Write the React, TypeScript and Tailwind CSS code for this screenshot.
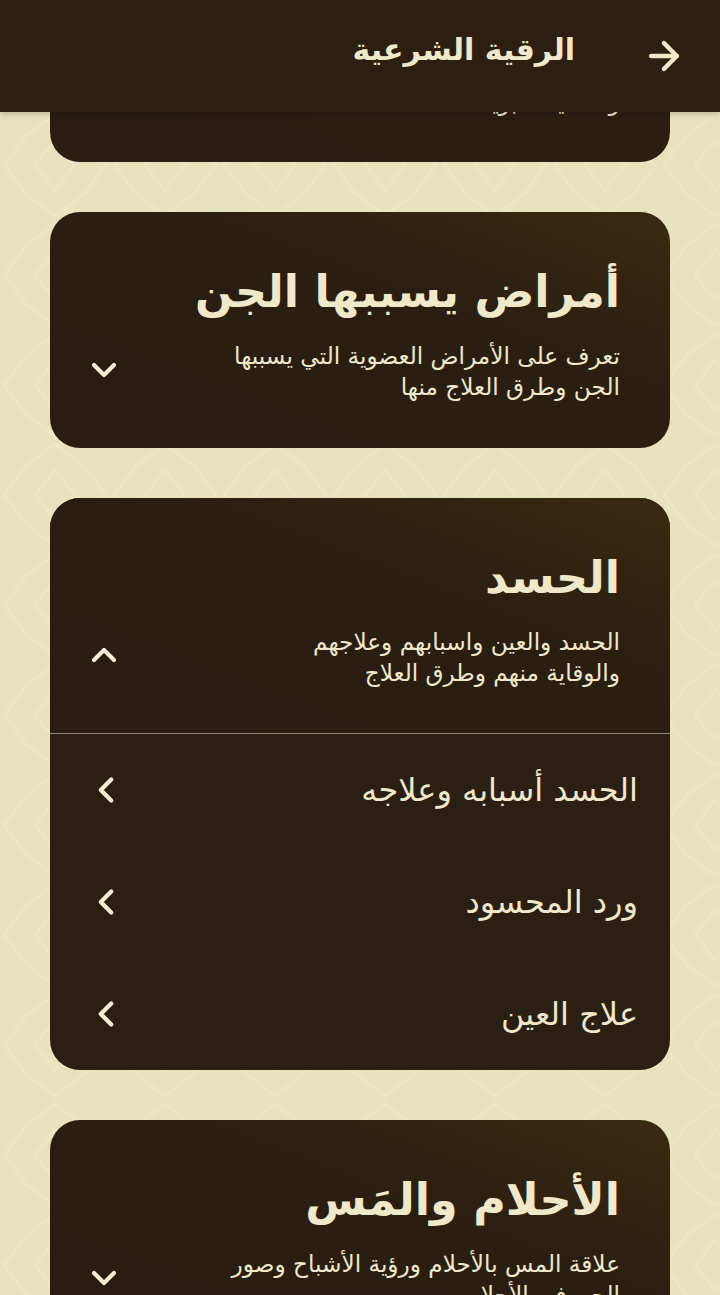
import { ChevronDown, ChevronLeft, ChevronUp, ArrowRight } from 'lucide-react';

const font = "font-['DejaVu_Sans','Noto_Sans',sans-serif]";

// faint arabesque tiles behind the cards
function Pattern() {
  return (
    <svg className="absolute inset-0 h-full w-full" aria-hidden="true">
      <defs>
        <pattern id="tile" width="110" height="110" patternUnits="userSpaceOnUse">
          <path d="M55 4 L84 26 L106 55 L84 84 L55 106 L26 84 L4 55 L26 26 Z M55 30 L75 55 L55 80 L35 55 Z" fill="none" stroke="#ebe6c6" strokeWidth="3" />
        </pattern>
      </defs>
      <rect width="100%" height="100%" fill="url(#tile)" />
    </svg>
  );
}

function CardHead({ title, desc, open }: { title: string; desc: string[]; open?: boolean }) {
  const Icon = open ? ChevronUp : ChevronDown;
  return (
    <div className="flex h-[235.5px] items-center justify-between bg-gradient-to-tr from-[#291d11] via-[#2a1e11] via-60% to-[#3b2a12] pr-[50px] pl-[34px]">
      <div className="pt-[10px]">
        <h2 className="text-[44.5px] leading-[50px] font-bold text-[#f0e9c9]">{title}</h2>
        <div className="mt-[23px] text-[23.2px] leading-[31px] text-[#efe8cb]">
          {desc.map((line) => <p key={line}>{line}</p>)}
        </div>
      </div>
      <Icon className="mt-[80px] h-[40px] w-[40px] text-[#f3edd2]" strokeWidth={2.5} />
    </div>
  );
}

function SubItem({ label }: { label: string }) {
  return (
    <div className="flex h-[112px] items-center justify-between pr-[32px] pl-[35px]">
      <span className="text-[32px] text-[#efe8cb]">{label}</span>
      <ChevronLeft className="h-[42px] w-[42px] text-[#f3edd2]" strokeWidth={2.4} />
    </div>
  );
}

export default function App() {
  return (
    <div dir="rtl" className={`relative h-[1295px] overflow-hidden bg-[#e8e3bf] ${font}`}>
      <Pattern />
      <header className="absolute inset-x-0 top-0 z-10 flex h-[112px] items-center bg-[#2c1f12] pr-[34px] shadow-[0_2px_6px_rgba(0,0,0,0.2)]">
        <ArrowRight className="h-[44px] w-[44px] text-[#f0e9c9]" strokeWidth={2.4} />
        <h1 className="mr-[67px] mb-[14px] text-[30px] font-bold text-[#f0e9c9]">الرقية الشرعية</h1>
      </header>
      <main className="relative mt-[-73.5px] flex flex-col gap-[50px] px-[50px]">
        <section className="overflow-hidden rounded-[30px]">
          <CardHead title="الرقية الشرعية" desc={['آيات الرقية الشرعية من القرآن', 'والأدعية النبوية']} />
        </section>
        <section className="overflow-hidden rounded-[30px]">
          <CardHead title="أمراض يسببها الجن" desc={['تعرف على الأمراض العضوية التي يسببها', 'الجن وطرق العلاج منها']} />
        </section>
        <section className="overflow-hidden rounded-[30px] bg-[#2b1f13]">
          <CardHead open title="الحسد" desc={['الحسد والعين واسبابهم وعلاجهم', 'والوقاية منهم وطرق العلاج']} />
          <div className="border-t border-[#8d8672]">
            <SubItem label="الحسد أسبابه وعلاجه" />
            <SubItem label="ورد المحسود" />
            <SubItem label="علاج العين" />
          </div>
        </section>
        <section className="overflow-hidden rounded-[30px]">
          <CardHead title="الأحلام والمَس" desc={['علاقة المس بالأحلام ورؤية الأشباح وصور', 'الجن في الأحلام']} />
        </section>
      </main>
    </div>
  );
}
